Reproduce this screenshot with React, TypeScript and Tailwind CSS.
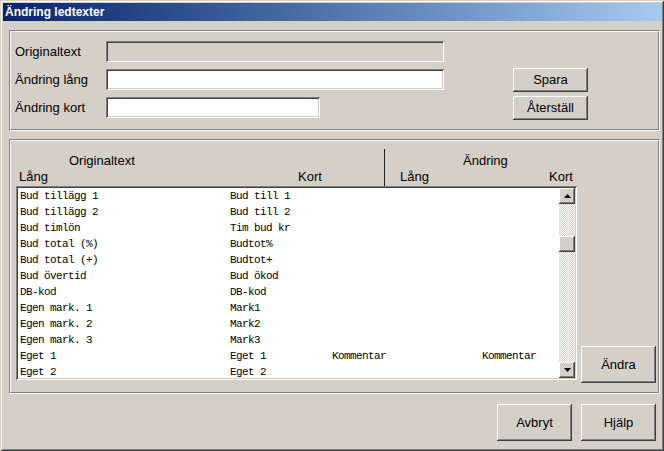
import React from "react";

const rows: [string, string, string, string][] = [
  ["Bud tillägg 1", "Bud till 1", "", ""],
  ["Bud tillägg 2", "Bud till 2", "", ""],
  ["Bud timlön", "Tim bud kr", "", ""],
  ["Bud total (%)", "Budtot%", "", ""],
  ["Bud total (+)", "Budtot+", "", ""],
  ["Bud övertid", "Bud ökod", "", ""],
  ["DB-kod", "DB-kod", "", ""],
  ["Egen mark. 1", "Mark1", "", ""],
  ["Egen mark. 2", "Mark2", "", ""],
  ["Egen mark. 3", "Mark3", "", ""],
  ["Eget 1", "Eget 1", "Kommentar", "Kommentar"],
  ["Eget 2", "Eget 2", "", ""],
];

function Btn({ label, className }: { label: string; className?: string }) {
  return (
    <div
      className={
        "w-[75px] flex items-center justify-center bg-[#d4d0c8] text-[13px] text-black shadow-[inset_-1px_-1px_#404040,inset_1px_1px_#ffffff,inset_-2px_-2px_#808080,inset_2px_2px_#d4d0c8] " +
        (className ?? "")
      }
    >
      {label}
    </div>
  );
}

function Field({ w, disabled }: { w: string; disabled?: boolean }) {
  return (
    <div
      className={
        "h-[21px] shadow-[inset_1px_1px_#808080,inset_-1px_-1px_#ffffff,inset_2px_2px_#404040,inset_-2px_-2px_#d4d0c8] " +
        w +
        (disabled ? " bg-[#d4d0c8]" : " bg-white")
      }
    />
  );
}

function Group({ h, children }: { h: string; children: React.ReactNode }) {
  return (
    <div className={"w-[651px] border border-t-[#808080] border-l-[#808080] border-b-white border-r-white " + h}>
      <div className="h-full border border-t-white border-l-white border-b-[#808080] border-r-[#808080]">
        {children}
      </div>
    </div>
  );
}

function ArrowBtn({ up }: { up?: boolean }) {
  return (
    <div className="h-[16px] w-[16px] flex items-center justify-center bg-[#d4d0c8] shadow-[inset_-1px_-1px_#404040,inset_1px_1px_#ffffff,inset_-2px_-2px_#808080,inset_2px_2px_#d4d0c8]">
      <svg width="7" height="4" viewBox="0 0 7 4">
        {up ? <polygon points="3.5,0 7,4 0,4" fill="#000" /> : <polygon points="0,0 7,0 3.5,4" fill="#000" />}
      </svg>
    </div>
  );
}

export default function App() {
  return (
    <div
      className="w-[664px] h-[451px] bg-[#d4d0c8] p-[3px] flex flex-col shadow-[inset_1px_1px_#d4d0c8,inset_-1px_-1px_#404040,inset_2px_2px_#ffffff,inset_-2px_-2px_#808080] text-black"
      style={{ fontFamily: '"Liberation Sans", Arial, sans-serif' }}
    >
      {/* Title bar */}
      <div className="h-[18px] bg-linear-to-r from-[#0a246a] to-[#a6caf0] flex items-center pl-[2px] mr-[-1px]">
        <span className="text-white font-bold text-[12px] leading-none">Ändring ledtexter</span>
      </div>

      <div className="pl-[6px] pt-[9px] flex flex-col">
        {/* Group 1 */}
        <Group h="h-[101px]">
          <div className="flex">
            <div className="pl-[4px] pt-[9px] flex flex-col gap-[7px]">
              <div className="flex items-center">
                <span className="w-[91px] text-[13px] leading-[15px]">Originaltext</span>
                <Field w="w-[338px]" disabled />
              </div>
              <div className="flex items-center">
                <span className="w-[91px] text-[13px] leading-[15px]">Ändring lång</span>
                <Field w="w-[338px]" />
              </div>
              <div className="flex items-center">
                <span className="w-[91px] text-[13px] leading-[15px]">Ändring kort</span>
                <Field w="w-[214px]" />
              </div>
            </div>
            <div className="ml-[69px] mt-[36px] flex flex-col gap-[4px]">
              <Btn label="Spara" className="h-[24px]" />
              <Btn label="Återställ" className="h-[24px]" />
            </div>
          </div>
        </Group>

        {/* Group 2 */}
        <div className="mt-[8px]">
          <Group h="h-[255px]">
            <div className="pl-[5px] flex flex-col">
              {/* headers */}
              <div className="flex h-[45px] text-[13px] leading-[15px]">
                <div className="w-[368px] pt-[12px] flex flex-col gap-[1px]">
                  <span className="pl-[53px]">Originaltext</span>
                  <div className="flex">
                    <span className="ml-[3px] w-[279px]">Lång</span>
                    <span>Kort</span>
                  </div>
                </div>
                <div className="w-[1px] h-[37px] mt-[8px] bg-[#202020]" />
                <div className="pt-[12px] flex flex-col gap-[1px]">
                  <span className="pl-[78px]">Ändring</span>
                  <div className="flex">
                    <span className="ml-[15px] w-[149px]">Lång</span>
                    <span>Kort</span>
                  </div>
                </div>
              </div>
              {/* list + Ändra */}
              <div className="flex">
                <div className="w-[561px] h-[194px] p-[2px] flex bg-white shadow-[inset_1px_1px_#808080,inset_-1px_-1px_#ffffff,inset_2px_2px_#404040,inset_-2px_-2px_#d4d0c8]">
                  <div
                    className="flex-1 overflow-hidden pl-[2px] text-[11px] tracking-[-0.6px] text-black"
                    style={{ fontFamily: '"Liberation Mono", "Courier New", monospace' }}
                  >
                    {rows.map((r, i) => (
                      <div key={i} className="h-[16px] flex items-center whitespace-pre leading-[16px]">
                        <span className="w-[210px]">{r[0]}</span>
                        <span className="w-[102px]">{r[1]}</span>
                        <span className="w-[150px]">{r[2]}</span>
                        <span>{r[3]}</span>
                      </div>
                    ))}
                  </div>
                  <div className="w-[16px] flex flex-col">
                    <ArrowBtn up />
                    <div className="flex-1 flex flex-col bg-[repeating-conic-gradient(#ffffff_0_25%,#d4d0c8_0_50%)] bg-[length:2px_2px]">
                      <div className="h-[32px]" />
                      <div className="h-[16px] bg-[#d4d0c8] shadow-[inset_-1px_-1px_#404040,inset_1px_1px_#ffffff,inset_-2px_-2px_#808080,inset_2px_2px_#d4d0c8]" />
                    </div>
                    <ArrowBtn />
                  </div>
                </div>
                <div className="ml-[4px] mt-[160px]">
                  <Btn label="Ändra" className="h-[37px]" />
                </div>
              </div>
            </div>
          </Group>
        </div>

        {/* Bottom buttons */}
        <div className="mt-[10px] flex gap-[9px] pl-[488px]">
          <Btn label="Avbryt" className="h-[37px]" />
          <Btn label="Hjälp" className="h-[37px]" />
        </div>
      </div>
    </div>
  );
}
